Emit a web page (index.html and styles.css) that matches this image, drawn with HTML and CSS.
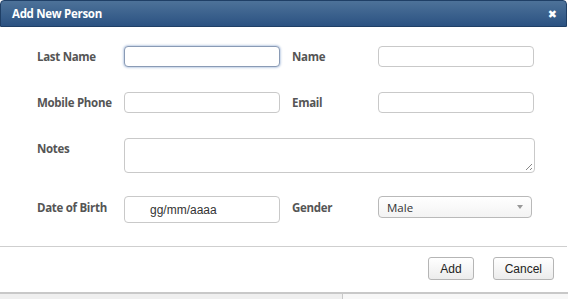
FILE: index.html
```html
<!DOCTYPE html>
<html>
<head>
<meta charset="utf-8">
<link rel="stylesheet" href="styles.css">
</head>
<body>
<div class="modal">
  <div class="header">
    <span class="title">Add New Person</span>
    <span class="close">&#x2716;</span>
  </div>
  <div class="body">
    <div class="row">
      <label class="lbl">Last Name</label>
      <input class="inp focus" type="text">
      <label class="lbl lbl2">Name</label>
      <input class="inp" type="text">
    </div>
    <div class="row">
      <label class="lbl">Mobile Phone</label>
      <input class="inp" type="text">
      <label class="lbl lbl2">Email</label>
      <input class="inp" type="text">
    </div>
    <div class="row row-notes">
      <label class="lbl">Notes</label>
      <div class="textarea"><span class="grip"></span></div>
    </div>
    <div class="row row-dob">
      <label class="lbl">Date of Birth</label>
      <div class="inp date">gg/mm/aaaa</div>
      <label class="lbl lbl2">Gender</label>
      <div class="select"><span>Male</span><span class="caret"></span></div>
    </div>
  </div>
  <div class="footer">
    <button class="btn">Add</button>
    <button class="btn">Cancel</button>
  </div>
</div>
<div class="under">
  <div class="under-left"></div>
  <div class="under-right"></div>
</div>
</body>
</html>
```
FILE: styles.css
```css
html, body {
  margin: 0;
  padding: 0;
  background: #ffffff;
}
.modal {
  width: 567px;
  height: 292px;
  background: #fff;
  font-family: "Open Sans", "Noto Sans", sans-serif;
  display: flex;
  flex-direction: column;
}
.header {
  height: 27px;
  flex: none;
  box-sizing: border-box;
  border: 1px solid #1f3f66;
  border-radius: 4px 4px 0 0;
  background: linear-gradient(#4d7299, #2b5282);
  display: flex;
  align-items: center;
  justify-content: space-between;
  padding: 0 9px 0 11px;
}
.title {
  color: #fff;
  font-weight: bold;
  font-size: 11.5px;
  letter-spacing: -0.3px;
}
.close {
  color: #fff;
  font-size: 11px;
  font-weight: bold;
  font-family: "DejaVu Sans", sans-serif;
  margin-top: 1px;
}
.body {
  flex: none;
  padding: 19px 0 0 37px;
  display: flex;
  flex-direction: column;
  height: 220px;
  box-sizing: border-box;
  border-bottom: 1px solid #cfcfcf;
}
.row {
  display: flex;
  align-items: center;
  height: 21px;
  margin-bottom: 25px;
}
.row-notes {
  align-items: flex-start;
  height: 35px;
  margin-bottom: 23px;
}
.row-notes .lbl {
  margin-top: 3px;
}
.lbl {
  width: 87px;
  color: #555;
  font-weight: bold;
  font-size: 11.5px;
  letter-spacing: -0.3px;
  line-height: 16px;
}
.lbl2 {
  width: 86px;
  margin-left: 12px;
}
.inp {
  width: 156px;
  height: 21px;
  box-sizing: border-box;
  border: 1px solid #c9c9c9;
  border-radius: 4px;
  background: #fff;
  padding: 0;
  margin: 0;
  outline: none;
}
.inp.focus {
  border-color: #8a9bb5;
  box-shadow: 0 0 2px 1px rgba(120, 150, 200, 0.45);
}
.textarea {
  position: relative;
  width: 411px;
  height: 35px;
  box-sizing: border-box;
  border: 1px solid #c9c9c9;
  border-radius: 4px;
}
.grip {
  position: absolute;
  right: 2px;
  bottom: 2px;
  width: 6px;
  height: 6px;
  background: linear-gradient(135deg, transparent 45%, #888 45%, #888 55%, transparent 55%, transparent 75%, #888 75%, #888 85%, transparent 85%);
}
.row-dob {
  height: 27px;
  align-items: flex-start;
}
.row-dob .lbl {
  margin-top: 4px;
}
.date {
  height: 27px;
  font-family: "Liberation Sans", Arial, sans-serif;
  font-size: 12px;
  color: #333;
  display: flex;
  align-items: center;
  padding-left: 25px;
}
.select {
  width: 154px;
  height: 22px;
  box-sizing: border-box;
  border: 1px solid #b9b9b9;
  border-radius: 4px;
  background: linear-gradient(#fff, #f3f3f3);
  display: flex;
  align-items: center;
  justify-content: space-between;
  padding: 0 8px 0 8px;
  font-size: 11.5px;
  color: #333;
}
.caret {
  width: 0;
  height: 0;
  border-left: 3px solid transparent;
  border-right: 3px solid transparent;
  border-top: 4px solid #999;
}
.footer {
  flex: 1;
  display: flex;
  justify-content: flex-end;
  align-items: flex-start;
  gap: 19px;
  padding: 10px 13px 0 0;
}
.btn {
  height: 23px;
  box-sizing: border-box;
  border: 1px solid #b5b5b5;
  border-radius: 3px;
  background: linear-gradient(#ffffff, #ececec);
  font-family: "Liberation Sans", Arial, sans-serif;
  font-size: 12px;
  color: #222;
  padding: 0 11px;
}
.under {
  display: flex;
  height: 6px;
  border-top: 2px solid #c8c8c8;
}
.under-left {
  width: 342px;
  background: #efefef;
  border-right: 1px solid #c8c8c8;
}
.under-right {
  flex: 1;
  background: #f7f7f7;
}
```
